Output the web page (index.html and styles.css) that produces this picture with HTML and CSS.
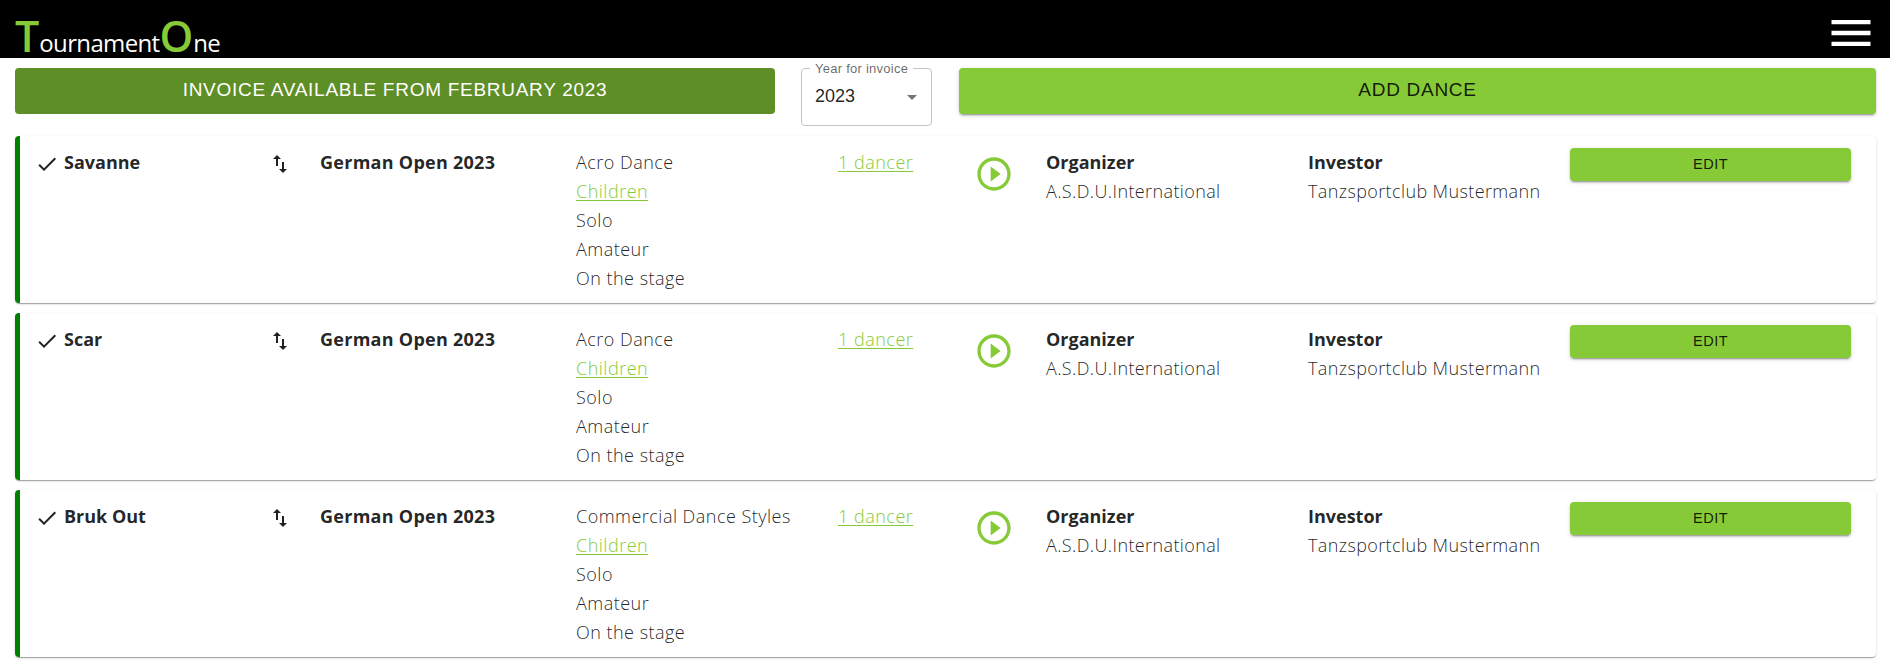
FILE: index.html
```html
<!DOCTYPE html>
<html lang="en">

<head>
    <meta charset="UTF-8">
    <meta name="viewport" content="width=device-width, initial-scale=1.0">
    <title>TournamentOne</title>
    <link rel="stylesheet" href="styles.css">
</head>

<body>
    <!-- shared icons -->
    <svg class="sprite" width="0" height="0">
        <symbol id="check" viewBox="0 0 24 24">
            <path d="M9 16.17 4.83 12l-1.42 1.41L9 19 21 7l-1.41-1.41z" />
        </symbol>
        <symbol id="swap" viewBox="0 0 24 24">
            <path d="M9 3 5 6.99h3V14h2V6.99h3L9 3zm7 14.01V10h-2v7.01h-3L15 21l4-3.99h-3z" />
        </symbol>
        <symbol id="play" viewBox="0 0 24 24">
            <path d="m10 16.5 6-4.5-6-4.5v9zM12 2C6.48 2 2 6.48 2 12s4.48 10 10 10 10-4.48 10-10S17.52 2 12 2zm0 18c-4.41 0-8-3.59-8-8s3.59-8 8-8 8 3.59 8 8-3.59 8-8 8z" />
        </symbol>
    </svg>

    <header class="topbar">
        <div class="logo"><span class="big">T</span><span class="small">ournament</span><span class="big">O</span><span class="small">ne</span></div>
        <svg class="menu" viewBox="0 0 24 24">
            <path d="M3 18h18v-2H3v2zm0-5h18v-2H3v2zm0-7v2h18V6H3z" />
        </svg>
    </header>

    <main>
        <div class="toolbar">
            <button class="btn invoice">Invoice available from February 2023</button>
            <fieldset class="year">
                <legend>Year for invoice</legend>
                <div class="year-value">
                    <span>2023</span>
                    <svg viewBox="0 0 24 24"><path d="m7 10 5 5 5-5z" /></svg>
                </div>
            </fieldset>
            <button class="btn add">Add dance</button>
        </div>

        <div class="dance">
            <div class="name"><svg class="icon"><use href="#check" /></svg><b>Savanne</b></div>
            <svg class="icon"><use href="#swap" /></svg>
            <b class="event">German Open 2023</b>
            <div class="details">
                <span>Acro Dance</span>
                <a>Children</a>
                <span>Solo</span>
                <span>Amateur</span>
                <span>On the stage</span>
            </div>
            <div><a>1 dancer</a></div>
            <svg class="play"><use href="#play" /></svg>
            <div class="org"><b>Organizer</b><span>A.S.D.U.International</span></div>
            <div class="org"><b>Investor</b><span>Tanzsportclub Mustermann</span></div>
            <button class="btn edit">Edit</button>
        </div>

        <div class="dance">
            <div class="name"><svg class="icon"><use href="#check" /></svg><b>Scar</b></div>
            <svg class="icon"><use href="#swap" /></svg>
            <b class="event">German Open 2023</b>
            <div class="details">
                <span>Acro Dance</span>
                <a>Children</a>
                <span>Solo</span>
                <span>Amateur</span>
                <span>On the stage</span>
            </div>
            <div><a>1 dancer</a></div>
            <svg class="play"><use href="#play" /></svg>
            <div class="org"><b>Organizer</b><span>A.S.D.U.International</span></div>
            <div class="org"><b>Investor</b><span>Tanzsportclub Mustermann</span></div>
            <button class="btn edit">Edit</button>
        </div>

        <div class="dance">
            <div class="name"><svg class="icon"><use href="#check" /></svg><b>Bruk Out</b></div>
            <svg class="icon"><use href="#swap" /></svg>
            <b class="event">German Open 2023</b>
            <div class="details">
                <span>Commercial Dance Styles</span>
                <a>Children</a>
                <span>Solo</span>
                <span>Amateur</span>
                <span>On the stage</span>
            </div>
            <div><a>1 dancer</a></div>
            <svg class="play"><use href="#play" /></svg>
            <div class="org"><b>Organizer</b><span>A.S.D.U.International</span></div>
            <div class="org"><b>Investor</b><span>Tanzsportclub Mustermann</span></div>
            <button class="btn edit">Edit</button>
        </div>
    </main>
</body>

</html>
```
FILE: styles.css
```css
* {
    box-sizing: border-box;
}

body {
    margin: 0;
    font-family: "Segoe UI", "Open Sans", "Noto Sans", sans-serif;
    font-size: 18px;
    font-weight: 300;
    line-height: 29px;
    color: rgba(0, 0, 0, 0.87);
    background: #fff;
    overflow: hidden;
}

.sprite {
    position: absolute;
}

.topbar {
    display: flex;
    justify-content: space-between;
    align-items: flex-start;
    height: 58px;
    padding: 7px 13px 0 15px;
    background: #000;
}

.logo {
    display: flex;
    align-items: baseline;
    line-height: 58px;
    color: #fff;
}

.logo .big {
    font-size: 43px;
    font-weight: 600;
    color: #86cb37;
}

.logo .small {
    font-size: 24px;
    font-weight: 400;
    letter-spacing: -0.65px;
}

.menu {
    width: 52px;
    height: 52px;
    fill: #fff;
}

main {
    padding: 0 14px 0 15px;
}

.toolbar {
    display: flex;
    align-items: flex-start;
    height: 78px;
    padding-top: 10px;
}

.btn {
    border: none;
    border-radius: 4px;
    padding: 0 0 2px;
    background: #86cb37;
    color: rgba(0, 0, 0, 0.87);
    font-family: "Liberation Sans", Arial, sans-serif;
    font-size: 19px;
    letter-spacing: 0.72px;
    text-transform: uppercase;
    box-shadow: 0 3px 1px -2px rgba(0, 0, 0, 0.2), 0 2px 2px 0 rgba(0, 0, 0, 0.14), 0 1px 5px 0 rgba(0, 0, 0, 0.12);
}

.invoice {
    width: 760px;
    height: 46px;
    background: #5e8e26;
    color: #fff;
    box-shadow: none;
}

.add {
    width: 917px;
    height: 46px;
    margin-left: 27px;
}

.year {
    width: 131px;
    height: 66px;
    margin: -8px 0 0 26px;
    padding: 0 11px 0 8px;
    border: 1px solid #c4c4c4;
    border-radius: 4px;
    font-family: "Liberation Sans", Arial, sans-serif;
}

.year legend {
    padding: 0 5px;
    font-size: 13px;
    line-height: 17px;
    letter-spacing: 0.25px;
    color: rgba(0, 0, 0, 0.6);
}

.year-value {
    display: flex;
    justify-content: space-between;
    align-items: center;
    padding: 5px 0 0 5px;
}

.year-value svg {
    width: 24px;
    height: 24px;
    margin-right: -4px;
    fill: rgba(0, 0, 0, 0.54);
}

.dance {
    display: grid;
    grid-template-columns: 233px 52px 256px 262px 136px 72px 262px 262px 281px;
    align-items: start;
    height: 167px;
    margin-bottom: 10px;
    padding: 12px 0 0 15px;
    border-left: 5px solid green;
    border-radius: 4px;
    box-shadow: 0 2px 1px -1px rgba(0, 0, 0, 0.2), 0 1px 1px 0 rgba(0, 0, 0, 0.14), 0 1px 3px 0 rgba(0, 0, 0, 0.12);
}

.dance b {
    font-weight: 700;
}

.dance .event {
    letter-spacing: 0.27px;
}

.name {
    display: flex;
    gap: 5px;
}

.icon {
    width: 24px;
    height: 24px;
    margin-top: 4px;
    fill: rgba(0, 0, 0, 0.87);
}

.play {
    width: 40px;
    height: 40px;
    margin-top: 6px;
    fill: #86cb37;
}

.details,
.org {
    display: flex;
    flex-direction: column;
    align-items: flex-start;
    white-space: nowrap;
}

.details span {
    letter-spacing: 0.48px;
}

.org span {
    letter-spacing: 0.38px;
}

.dance a {
    color: #86cb37;
    letter-spacing: 0.5px;
    text-decoration: underline;
    text-decoration-thickness: 1px;
    text-underline-offset: 2px;
}

.edit {
    height: 33px;
    font-size: 14.5px;
    letter-spacing: 0.5px;
}
```
